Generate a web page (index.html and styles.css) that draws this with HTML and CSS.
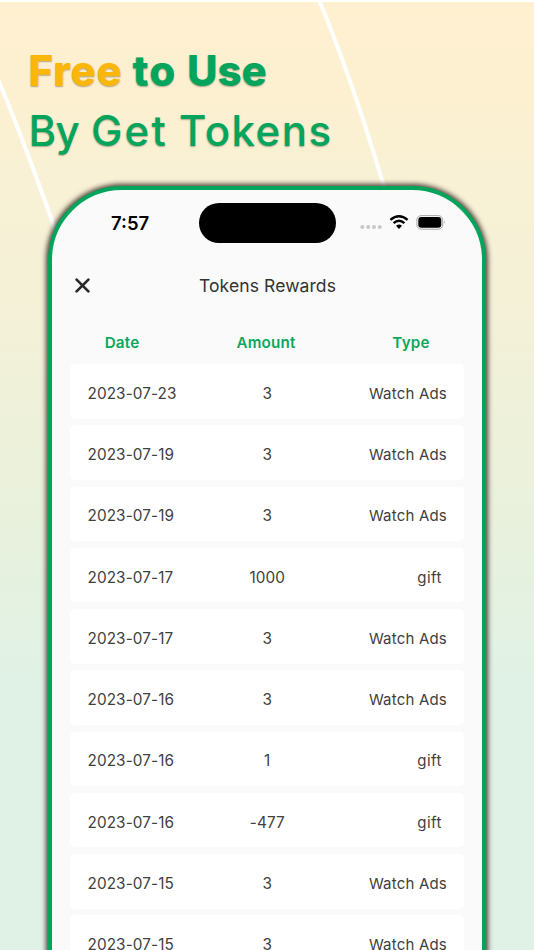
FILE: index.html
```html
<!DOCTYPE html>
<html lang="en">
<head>
<meta charset="utf-8">
<title>Tokens Rewards</title>
<link rel="stylesheet" href="styles.css">
</head>
<body>
<main class="poster">
  <svg class="streaks" viewBox="0 0 534 260" aria-hidden="true">
    <path d="M-8 65Q22 135 56 232M318.200 -2Q352 78 388 200"/>
  </svg>
  <h1 class="headline">
    <span class="line bold"><span class="word w-free">Free</span> <span class="word w-to">to</span> <span class="word w-use">Use</span></span>
    <span class="line"><span class="word w-by">By</span> <span class="word w-get">Get</span> <span class="word w-tokens">Tokens</span></span>
  </h1>
  <section class="phone">
    <div class="status">
      <span class="time">7:57</span>
      <span class="island"></span>
      <svg class="indicators" viewBox="0 0 90 20" aria-hidden="true">
        <g fill="#c8c8c9"><circle cx="4.300" cy="14" r="2"/><circle cx="10.200" cy="14" r="2"/><circle cx="16" cy="14" r="2"/><circle cx="21.800" cy="14" r="2"/></g>
        <g fill="none" stroke="#000" stroke-width="2.500"><path d="M32.400 6.900Q41 -.5 49.600 6.900"/><path d="M35.600 10.100Q41 5.400 46.400 10.100"/></g>
        <path d="M41 15.900L38 12.700Q41 10.300 44 12.700Z"/>
        <rect x="58.900" y="2.600" width="25.800" height="13.600" rx="4.300" fill="none" stroke="#a6a6a7"/>
        <rect x="60.300" y="4" width="23" height="10.800" rx="3"/>
        <path d="M86.200 7.300Q88 9.400 86.200 11.500Z" fill="#a6a6a7"/>
      </svg>
    </div>
    <header class="bar">
      <svg class="close" viewBox="0 0 14 14" aria-label="Close"><path d="M1.500 1.500L12.500 12.500M12.500 1.500L1.500 12.500"/></svg>
      <h2 class="title">Tokens Rewards</h2>
    </header>
    <div class="cols"><span>Date</span><span>Amount</span><span>Type</span></div>
    <div class="list">
      <div class="row"><span>2023-07-23</span><span>3</span><span>Watch Ads</span></div>
      <div class="row"><span>2023-07-19</span><span>3</span><span>Watch Ads</span></div>
      <div class="row"><span>2023-07-19</span><span>3</span><span>Watch Ads</span></div>
      <div class="row gift"><span>2023-07-17</span><span>1000</span><span>gift</span></div>
      <div class="row"><span>2023-07-17</span><span>3</span><span>Watch Ads</span></div>
      <div class="row"><span>2023-07-16</span><span>3</span><span>Watch Ads</span></div>
      <div class="row gift"><span>2023-07-16</span><span>1</span><span>gift</span></div>
      <div class="row gift"><span>2023-07-16</span><span>-477</span><span>gift</span></div>
      <div class="row"><span>2023-07-15</span><span>3</span><span>Watch Ads</span></div>
      <div class="row"><span>2023-07-15</span><span>3</span><span>Watch Ads</span></div>
    </div>
  </section>
</main>
</body>
</html>
```
FILE: styles.css
```css
* { box-sizing: border-box; }
body { margin: 0; font-family: Inter, "Liberation Sans", sans-serif; }
.poster {
  position: relative;
  height: 950px;
  overflow: hidden;
  border-top: 2px solid #fff;
  background: linear-gradient(#fff0d0 0%, #fcf0d0 10%, #f8f1d5 19%, #f3f1d8 35%, #e9f1dc 54%, #e0f2e6 72%, #e0f2e6 100%);
}
.streaks { position: absolute; left: 0; top: -2px; width: 534px; height: 260px; }
.streaks path { fill: none; stroke: #fff; stroke-width: 4; }
.headline {
  position: relative;
  height: 183.500px;
  margin: 0;
  padding: 39px 0 0 28.500px;
  font-size: 42px;
  font-weight: 500;
  color: #03a55c;
}
.line { display: flex; height: 60px; line-height: 60px; text-shadow: 0 1px 1.500px rgba(60, 50, 30, .4); }
.bold { font-weight: 800; }
.word { display: block; white-space: nowrap; }
.w-free { width: 104px; color: #fbb709; letter-spacing: .8px; }
.w-to { width: 54.500px; letter-spacing: 1px; }
.w-use { width: 90px; letter-spacing: -.1px; }
.w-by { width: 62.500px; letter-spacing: -.6px; }
.w-get { width: 88px; letter-spacing: 2.200px; }
.w-tokens { letter-spacing: 1.500px; }
.phone {
  position: relative;
  width: 438px;
  height: 850px;
  margin-left: 48px;
  padding: 13px 18px 0;
  border: 4.500px solid #03a55c;
  border-radius: 74px;
  background: #fafafa;
  box-shadow: 0 0 5px 2px rgba(50, 35, 30, .85);
}
.status { display: flex; height: 40px; align-items: center; }
.time { width: 128.500px; padding-left: 41px; font-size: 18.500px; font-weight: 600; }
.island { width: 137px; height: 40px; border-radius: 20px; background: #000; }
.indicators { width: 90px; height: 20px; margin-left: 22px; }
.bar { display: flex; height: 46px; align-items: center; margin-top: 20px; }
.close { width: 15px; height: 15px; margin-left: 5px; }
.close path { fill: none; stroke: #292929; stroke-width: 2.500; stroke-linecap: round; }
.title { margin: 0 0 0 109px; font-size: 17.500px; font-weight: 400; color: #333; letter-spacing: .1px; white-space: nowrap; }
.cols { display: grid; grid-template-columns: 104px 1fr 106px; height: 30px; margin-top: 19px; align-items: center; text-align: center; font-size: 15.200px; font-weight: 600; color: #0ba760; letter-spacing: .2px; }
.list { display: grid; gap: 6.750px; margin-top: 6.500px; }
.row { display: grid; grid-template-columns: 120px 1fr 120px; height: 54.500px; padding: 4px 17px 0 17.500px; align-items: center; border-radius: 5px; background: #fff; font-size: 15.300px; color: #404040; letter-spacing: .1px; }
.row span:nth-child(2) { text-align: center; }
.row span:nth-child(3) { text-align: right; white-space: nowrap; font-size: 15px; letter-spacing: .2px; }
.gift span:nth-child(3) { padding-right: 5px; letter-spacing: .5px; }
```
